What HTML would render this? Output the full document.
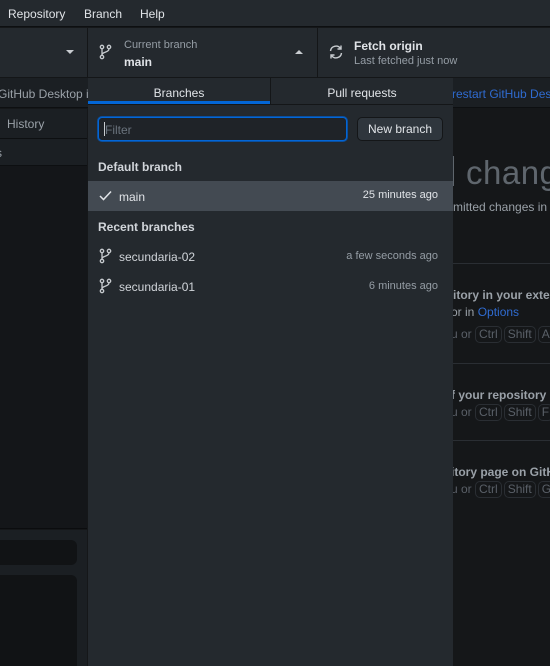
<!DOCTYPE html>
<html><head><style>
*{margin:0;padding:0;box-sizing:border-box}
body{width:550px;height:666px;overflow:hidden;background:#151719;font-family:"Liberation Sans",sans-serif;font-size:12px;color:#d1d5da;position:relative}
.a{position:absolute;white-space:nowrap}
.kbd{display:inline-block;border:1px solid #2a2e33;border-radius:5px;padding:0 3px;margin-right:2px;color:#5a6068;line-height:15px}
#rc{position:absolute;left:453px;top:109px;width:97px;height:557px;background:#151719;overflow:hidden}
#rc .a{margin-left:-453px;margin-top:-109px}
</style></head><body>
<div class="a" style="left:0;top:0;width:550px;height:27px;background:#24292e;border-bottom:1px solid #0d0f11"></div>
<div class="a" style="left:8px;top:7px;color:#e1e4e8">Repository</div>
<div class="a" style="left:84px;top:7px;color:#e1e4e8">Branch</div>
<div class="a" style="left:140px;top:7px;color:#e1e4e8">Help</div>
<div class="a" style="left:0;top:28px;width:550px;height:50px;background:#24292e;border-bottom:1px solid #141618"></div>
<div class="a" style="left:87px;top:28px;width:1px;height:50px;background:#141618"></div>
<div class="a" style="left:317px;top:28px;width:1px;height:50px;background:#141618"></div>
<div class="a" style="left:66px;top:50px;width:0;height:0;border-left:4px solid transparent;border-right:4px solid transparent;border-top:4px solid #c8ccd0"></div>
<div class="a" style="left:295px;top:50px;width:0;height:0;border-left:4px solid transparent;border-right:4px solid transparent;border-bottom:4px solid #c8ccd0"></div>
<svg class="a" style="left:99px;top:44px" width="13" height="16" viewBox="0 0 13 16" fill="none" stroke="#c8ccd0" stroke-width="1.3"><circle cx="3" cy="3" r="1.7"/><circle cx="10" cy="3" r="1.7"/><circle cx="3" cy="13" r="1.7"/><path d="M3 4.7v6.6M10 4.7c0 4-7 3-7 6"/></svg>
<div class="a" style="left:124px;top:39px;font-size:11px;color:#959da5">Current branch</div>
<div class="a" style="left:124px;top:55px;font-weight:bold;color:#e1e4e8">main</div>
<svg class="a" style="left:328px;top:44px" width="16" height="16" viewBox="0 0 16 16" fill="none" stroke="#c8ccd0" stroke-width="1.4"><path d="M2.5 7A5.5 5.5 0 0 1 12.5 4.5M13.5 9A5.5 5.5 0 0 1 3.5 11.5"/><path d="M13 1.5v3.5h-3.5M3 14.5V11h3.5"/></svg>
<div class="a" style="left:354px;top:39px;font-weight:bold;color:#e1e4e8">Fetch origin</div>
<div class="a" style="left:354px;top:55px;font-size:11px;color:#959da5">Last fetched just now</div>
<div class="a" style="left:0;top:78px;width:550px;height:30px;background:#1b1f23;border-bottom:1px solid #0d0f11;overflow:hidden">
<div class="a" style="left:-2px;top:9px;color:#9aa1a8">GitHub Desktop is</div>
<div class="a" style="left:452px;top:9px;color:#2f6bd0">restart GitHub Desktop</div>
</div>
<div class="a" style="left:0;top:109px;width:87px;height:30px;border-bottom:1px solid #0d0f11;background:#1b1f23"></div>
<div class="a" style="left:7px;top:117px;color:#9aa1a8">History</div>
<div class="a" style="left:0;top:139px;width:87px;height:27px;border-bottom:1px solid #0d0f11;background:#1b1f23;overflow:hidden"><div class="a" style="left:-4px;top:7px;color:#9aa1a8">s</div></div>
<div class="a" style="left:0;top:166px;width:87px;height:363px;background:#141619;border-bottom:1px solid #0b0c0e"></div>
<div class="a" style="left:0;top:530px;width:87px;height:136px;background:#1b1f23"></div>
<div class="a" style="left:0;top:540px;width:77px;height:25px;background:#111315;border-radius:0 6px 6px 0"></div>
<div class="a" style="left:0;top:575px;width:77px;height:91px;background:#111315;border-radius:0 6px 0 0"></div>
<div id="rc">
<div class="a" style="left:452px;top:156px;width:2px;height:30px;background:#5f666d;margin-left:-453px"></div>
<div class="a" style="left:466px;top:154px;font-size:33px;color:#5f666d;letter-spacing:0.5px">change</div>
<div class="a" style="left:453px;top:200px;color:#9aa1a8">mitted changes in</div>
<div class="a" style="left:453px;top:263px;width:97px;height:1px;background:#2a2e33"></div>
<div class="a" style="left:453px;top:288px;font-weight:bold;color:#9aa1a8">itory in your external editor</div>
<div class="a" style="left:451px;top:305px;color:#9aa1a8">or in <span style="color:#2f6bd0">Options</span></div>
<div class="a" style="left:451px;top:326px;color:#5a6068">u or <span class="kbd">Ctrl</span><span class="kbd">Shift</span><span class="kbd">A</span></div>
<div class="a" style="left:453px;top:363px;width:97px;height:1px;background:#2a2e33"></div>
<div class="a" style="left:451px;top:388px;font-weight:bold;color:#9aa1a8">f your repository in</div>
<div class="a" style="left:451px;top:404px;color:#5a6068">u or <span class="kbd">Ctrl</span><span class="kbd">Shift</span><span class="kbd">F</span></div>
<div class="a" style="left:453px;top:440px;width:97px;height:1px;background:#2a2e33"></div>
<div class="a" style="left:451px;top:465px;font-weight:bold;color:#9aa1a8">itory page on GitHub</div>
<div class="a" style="left:451px;top:481px;color:#5a6068">u or <span class="kbd">Ctrl</span><span class="kbd">Shift</span><span class="kbd">G</span></div>
</div>
<div class="a" style="left:88px;top:78px;width:365px;height:588px;background:#24292e"></div>
<div class="a" style="left:88px;top:78px;width:365px;height:27px;border-bottom:1px solid #141618"></div>
<div class="a" style="left:270px;top:78px;width:1px;height:26px;background:#141618"></div>
<div class="a" style="left:88px;top:101px;width:182px;height:3px;background:#0366d6"></div>
<div class="a" style="left:88px;top:86px;width:182px;text-align:center;color:#e1e4e8">Branches</div>
<div class="a" style="left:271px;top:86px;width:182px;text-align:center;color:#e1e4e8">Pull requests</div>
<div class="a" style="left:98px;top:117px;width:249px;height:24px;border:1px solid #0366d6;border-radius:4px;background:#1f2328;box-shadow:0 0 0 1px #0b4f9e"></div>
<div class="a" style="left:104px;top:122px;width:1px;height:14px;background:#c8ccd0"></div>
<div class="a" style="left:105px;top:123px;color:#6a737d">Filter</div>
<div class="a" style="left:357px;top:117px;width:86px;height:24px;border:1px solid #141618;border-radius:5px;background:#2f363d;color:#e1e4e8;text-align:center;line-height:22px">New branch</div>
<div class="a" style="left:98px;top:160px;font-weight:bold;color:#d1d5da">Default branch</div>
<div class="a" style="left:88px;top:181px;width:365px;height:30px;background:#434a52"></div>
<svg class="a" style="left:99px;top:190px" width="13" height="11" viewBox="0 0 13 11" fill="none" stroke="#e1e4e8" stroke-width="1.5"><path d="M1 6l3.5 3.5L12 1.5"/></svg>
<div class="a" style="left:119px;top:190px;color:#e1e4e8">main</div>
<div class="a" style="left:350px;top:189px;width:88px;text-align:right;font-size:11px;color:#e1e4e8">25 minutes ago</div>
<div class="a" style="left:98px;top:220px;font-weight:bold;color:#d1d5da">Recent branches</div>
<svg class="a" style="left:99px;top:248px" width="13" height="16" viewBox="0 0 13 16" fill="none" stroke="#c8ccd0" stroke-width="1.3"><circle cx="3" cy="3" r="1.7"/><circle cx="10" cy="3" r="1.7"/><circle cx="3" cy="13" r="1.7"/><path d="M3 4.7v6.6M10 4.7c0 4-7 3-7 6"/></svg>
<div class="a" style="left:119px;top:250px;color:#d1d5da">secundaria-02</div>
<div class="a" style="left:300px;top:250px;width:138px;text-align:right;font-size:11px;color:#959da5">a few seconds ago</div>
<svg class="a" style="left:99px;top:278px" width="13" height="16" viewBox="0 0 13 16" fill="none" stroke="#c8ccd0" stroke-width="1.3"><circle cx="3" cy="3" r="1.7"/><circle cx="10" cy="3" r="1.7"/><circle cx="3" cy="13" r="1.7"/><path d="M3 4.7v6.6M10 4.7c0 4-7 3-7 6"/></svg>
<div class="a" style="left:119px;top:280px;color:#d1d5da">secundaria-01</div>
<div class="a" style="left:300px;top:280px;width:138px;text-align:right;font-size:11px;color:#959da5">6 minutes ago</div>
</body></html>
